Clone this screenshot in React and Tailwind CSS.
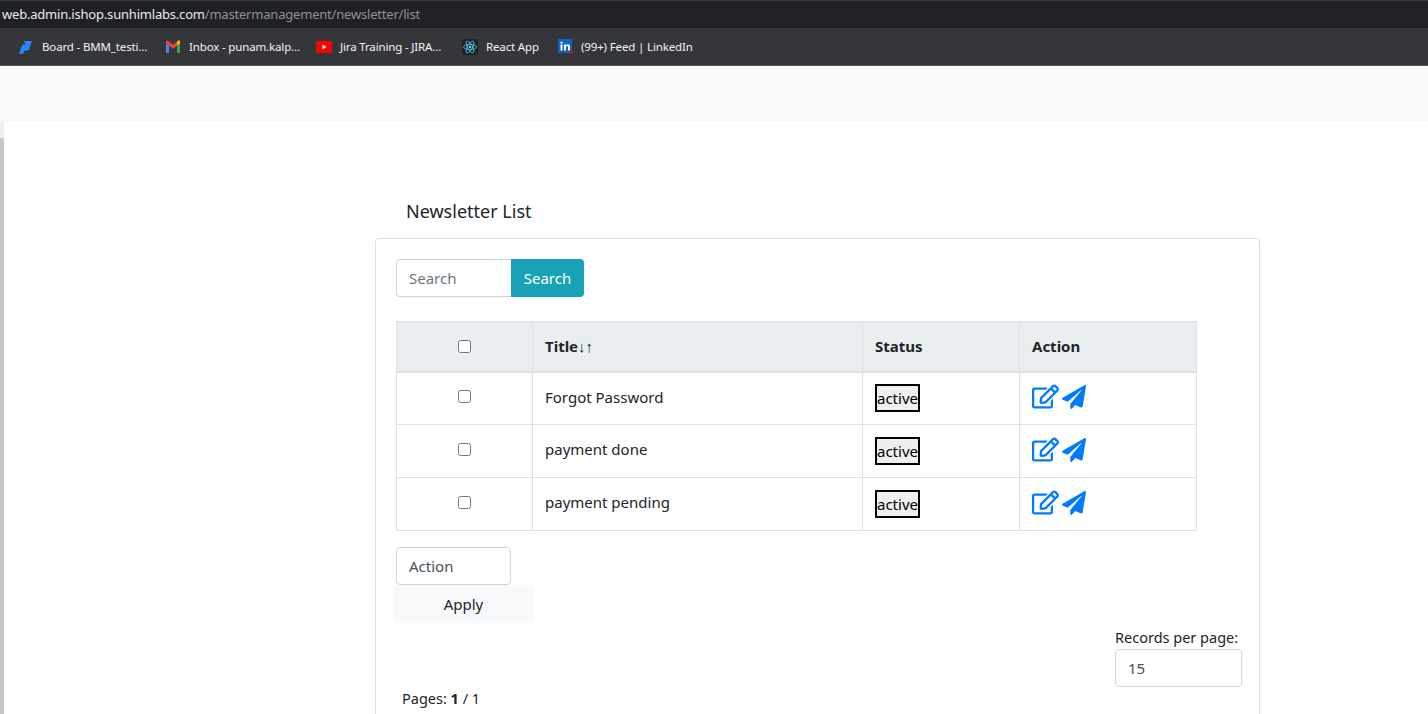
import { FaRegEdit, FaPaperPlane } from 'react-icons/fa'

const rows = ['Forgot Password', 'payment done', 'payment pending']

function BoardIcon() {
  return (
    <svg width="16" height="16" viewBox="0 0 16 16">
      <path d="M6 2h8l-2.5 7.5c-.6 1.6-1.6 2-3 2H6.5L5 15H1l2.5-7.5C4 6 5 5.500 6 5.500h1.500z" fill="#2684ff" />
    </svg>
  )
}

function GmailIcon() {
  return (
    <svg width="16" height="14" viewBox="0 0 16 14">
      <path d="M1 13V3l3 2.200V13z" fill="#4285f4" />
      <path d="M12 13V5.200L15 3v10z" fill="#34a853" />
      <path d="M1 3.500V1.500C1 .6 2 0 3 .8l5 3.900 5-3.900C14 0 15 .6 15 1.500v2L8 8.700z" fill="#ea4335" />
      <path d="M12 5.200V1.800l1-.9c1-.8 2-.3 2 .6v2z" fill="#fbbc04" />
    </svg>
  )
}

function YoutubeIcon() {
  return (
    <svg width="16" height="12" viewBox="0 0 16 12">
      <rect width="16" height="12" rx="3" fill="#ff0000" />
      <path d="M6.500 3.500v5L10.500 6z" fill="#fff" />
    </svg>
  )
}

function ReactIcon() {
  return (
    <svg width="16" height="16" viewBox="0 0 16 16">
      <rect width="16" height="16" rx="2" fill="#20232a" />
      <g fill="none" stroke="#61dafb" strokeWidth="0.7">
        <ellipse cx="8" cy="8" rx="6.500" ry="2.500" />
        <ellipse cx="8" cy="8" rx="6.500" ry="2.500" transform="rotate(60 8 8)" />
        <ellipse cx="8" cy="8" rx="6.500" ry="2.500" transform="rotate(120 8 8)" />
      </g>
      <circle cx="8" cy="8" r="1.300" fill="#61dafb" />
    </svg>
  )
}

function LinkedinIcon() {
  return (
    <svg width="15" height="15" viewBox="0 0 15 15">
      <rect width="14" height="14" fill="#0a66c2" />
      <rect x="2.500" y="5.500" width="2" height="6" fill="#fff" />
      <rect x="2.500" y="2.800" width="2" height="1.800" fill="#fff" />
      <path d="M6 5.500h2v.8c.5-.7 1.100-1 1.900-1 1.400 0 2.100.9 2.100 2.500v3.700h-2V8.200c0-.8-.3-1.200-.9-1.200S8 7.400 8 8.200v3.300H6z" fill="#fff" />
      <circle cx="12.800" cy="12.800" r="1.800" fill="#d11124" />
    </svg>
  )
}

const bookmarks = [
  { icon: <BoardIcon />, label: 'Board - BMM_testi...', width: 'w-[147px]' },
  { icon: <GmailIcon />, label: 'Inbox - punam.kalp...', width: 'w-[151px]' },
  { icon: <YoutubeIcon />, label: 'Jira Training - JIRA...', width: 'w-[146px]' },
  { icon: <ReactIcon />, label: 'React App', width: 'w-[95px]' },
  { icon: <LinkedinIcon />, label: '(99+) Feed | LinkedIn', width: 'w-[150px]' },
]

export default function App() {
  return (
    <div className="h-[714px] overflow-hidden bg-white font-['Noto_Sans','Open_Sans',sans-serif] text-[#212529]">
      <div className="flex h-[28px] items-center border-t border-[#3a3b3e] bg-[#202124] pl-[2px] text-[13px] tracking-[-0.2px]">
        <span className="text-[#e8eaed]">web.admin.ishop.sunhimlabs.com</span>
        <span className="text-[#8f9194]">/mastermanagement/newsletter/list</span>
      </div>

      <div className="flex h-[38px] items-center border-b border-[#56575a] bg-[#35363a] pl-[18px] text-[11.5px] tracking-[-0.15px] text-[#f1f3f4]">
        {bookmarks.map((b) => (
          <div key={b.label} className={`flex items-center gap-[8px] ${b.width}`}>
            <span className="flex w-[16px] justify-center">{b.icon}</span>
            <span className="whitespace-nowrap">{b.label}</span>
          </div>
        ))}
      </div>

      <div className="h-[56px] bg-[#f8f9fa]" />

      <div className="flex">
        <div className="flex w-[4px] flex-col">
          <div className="h-[16px] bg-[#f0f0f0]" />
          <div className="h-[600px] bg-[#c8c8c8]" />
        </div>

        <div className="ml-[371px] w-[885px] shrink-0">
          <h1 className="ml-[31px] mt-[76px] h-[40px] text-[18px] leading-[26px]">Newsletter List</h1>

          <div className="h-[600px] rounded-[4px] border border-[#dfdfdf] px-[20px] pt-[20px]">
            <div className="flex h-[38px] text-[15px]">
              <input
                placeholder="Search"
                className="h-[38px] w-[115px] rounded-l-[4px] border border-r-0 border-[#ced4da] px-[12px] outline-none placeholder:text-[#6c757d]"
              />
              <button className="h-[38px] w-[73px] rounded-r-[4px] bg-[#17a2b8] text-white">Search</button>
            </div>

            <table className="mt-[24px] w-[801px] table-fixed border-collapse text-[15px]">
              <thead>
                <tr className="h-[50px] bg-[#e9eef1]">
                  <th className="w-[136px] border border-b-2 border-[#dee2e6]">
                    <input type="checkbox" className="block mx-auto h-[13px] w-[13px]" />
                  </th>
                  <th className="w-[330px] border border-b-2 border-[#dee2e6] px-[12px] text-left font-bold">
                    <span>Title</span>
                    <span>↓↑</span>
                  </th>
                  <th className="w-[157px] border border-b-2 border-[#dee2e6] px-[12px] text-left font-bold">Status</th>
                  <th className="border border-b-2 border-[#dee2e6] px-[12px] text-left font-bold">Action</th>
                </tr>
              </thead>
              <tbody>
                {rows.map((title) => (
                  <tr key={title} className="h-[53px]">
                    <td className="border border-[#dee2e6]">
                      <input type="checkbox" className="mb-[4px] block mx-auto h-[13px] w-[13px]" />
                    </td>
                    <td className="border border-[#dee2e6] px-[12px] pb-[3px]">{title}</td>
                    <td className="border border-[#dee2e6] px-[12px]">
                      <button className="flex h-[28px] w-[45px] items-center justify-center border-2 border-black bg-[#efefef] text-[15px] text-black">
                        active
                      </button>
                    </td>
                    <td className="border border-[#dee2e6] px-[12px] pb-[3px]">
                      <div className="flex items-center gap-[3px] text-[#007bff]">
                        <FaRegEdit size={27} className="shrink-0" />
                        <FaPaperPlane size={24} className="shrink-0" />
                      </div>
                    </td>
                  </tr>
                ))}
              </tbody>
            </table>

            <input
              placeholder="Action"
              className="mt-[16px] block h-[38px] w-[115px] rounded-[4px] border border-[#ced4da] px-[12px] text-[15px] outline-none placeholder:text-[#495057]"
            />
            <button className="-ml-[3px] block h-[38px] w-[141px] rounded-[4px] bg-[#f8f9fa] text-[15px]">Apply</button>

            <div className="flex items-start justify-between">
              <p className="ml-[6px] mt-[63px] text-[14.5px] leading-[24px]">
                Pages: <b>1</b> / 1
              </p>
              <div className="mr-[-3px] mt-[3px] w-[127px] text-[14.5px] leading-[22px]">
                <div className="whitespace-nowrap">Records per page:</div>
                <input
                  defaultValue="15"
                  className="mt-[1px] block h-[38px] w-[127px] rounded-[4px] border border-[#ced4da] px-[12px] text-[15px] text-[#495057] outline-none"
                />
              </div>
            </div>
          </div>
        </div>
      </div>
    </div>
  )
}
